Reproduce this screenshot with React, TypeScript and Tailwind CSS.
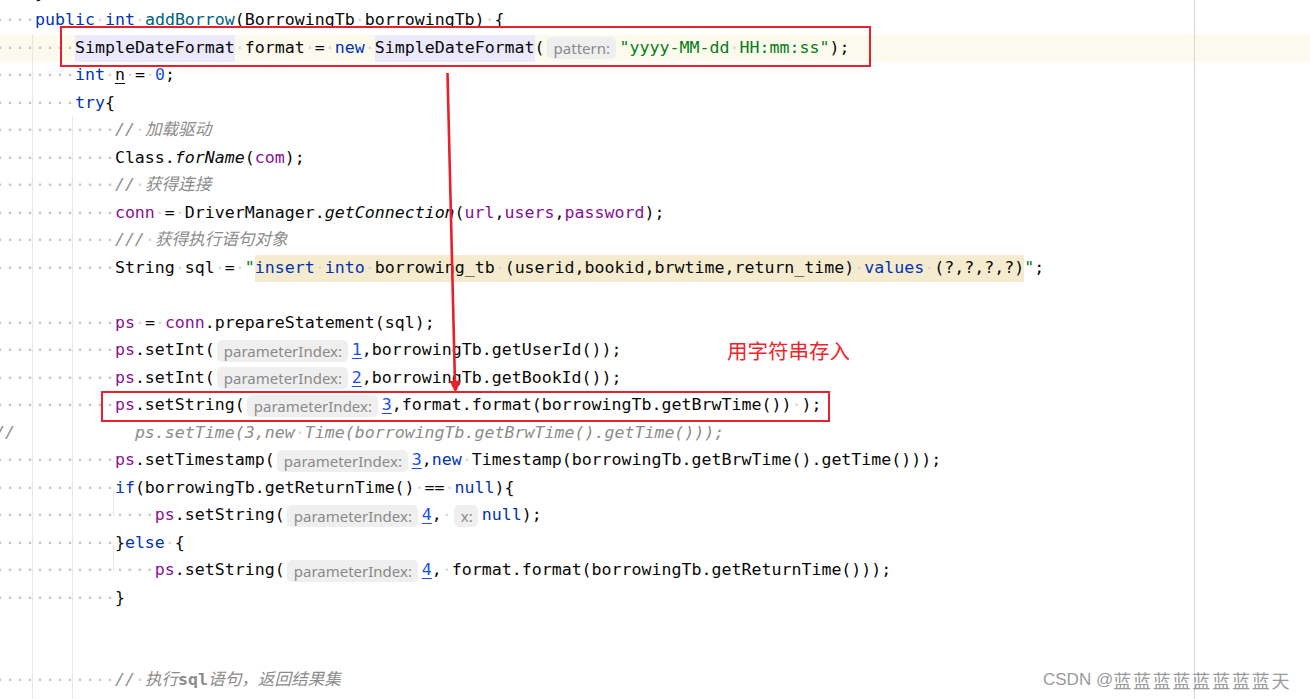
import React from "react";

type Seg = [string, string] | { hint: string; w: number };
type Row = { ind: number; segs: Seg[]; caret?: boolean; noDots?: boolean };

const S: Record<string, string> = {
  d: "text-[#080808]",
  k: "text-[#0033b3]",
  m: "text-[#00627a]",
  f: "text-[#871094]",
  s: "text-[#067d17]",
  n: "text-[#1750eb]",
  nu: "text-[#1750eb] underline underline-offset-[3px] decoration-[1px]",
  u: "text-[#080808] underline underline-offset-[3px] decoration-[1px]",
  i: "italic text-[#080808]",
  c: "italic text-[#8c8c8c]",
  cb: "font-bold text-[#8c8c8c]",
  cls: "bg-[#ebe9fb] text-[#080808]",
  sql: "bg-[#f5ecd0] text-[#080808]",
  sqlk: "bg-[#f5ecd0] text-[#0033b3]",
};

const P = "parameterIndex:";

const rows: Row[] = [
  { ind: 4, noDots: true, segs: [["}", "d"]] },
  {
    ind: 4,
    segs: [
      ["public", "k"],
      [" ", "d"],
      ["int", "k"],
      [" ", "d"],
      ["addBorrow", "m"],
      ["(BorrowingTb borrowingTb) {", "d"],
    ],
  },
  {
    ind: 8,
    caret: true,
    segs: [
      ["SimpleDateFormat", "cls"],
      [" format = ", "d"],
      ["new", "k"],
      [" ", "d"],
      ["SimpleDateFormat", "cls"],
      ["(", "d"],
      { hint: "pattern:", w: 69 },
      ['"yyyy-MM-dd HH:mm:ss"', "s"],
      [");", "d"],
    ],
  },
  {
    ind: 8,
    segs: [
      ["int", "k"],
      [" ", "d"],
      ["n", "u"],
      [" = ", "d"],
      ["0", "n"],
      [";", "d"],
    ],
  },
  { ind: 8, segs: [["try", "k"], ["{", "d"]] },
  { ind: 12, segs: [["// 加载驱动", "c"]] },
  {
    ind: 12,
    segs: [
      ["Class.", "d"],
      ["forName", "i"],
      ["(", "d"],
      ["com", "f"],
      [");", "d"],
    ],
  },
  { ind: 12, segs: [["// 获得连接", "c"]] },
  {
    ind: 12,
    segs: [
      ["conn", "f"],
      [" = DriverManager.", "d"],
      ["getConnection", "i"],
      ["(", "d"],
      ["url", "f"],
      [",", "d"],
      ["users", "f"],
      [",", "d"],
      ["password", "f"],
      [");", "d"],
    ],
  },
  { ind: 12, segs: [["/// 获得执行语句对象", "c"]] },
  {
    ind: 12,
    segs: [
      ["String sql = ", "d"],
      ['"', "s"],
      ["insert", "sqlk"],
      [" ", "sql"],
      ["into", "sqlk"],
      [" borrowing_tb (userid,bookid,brwtime,return_time) ", "sql"],
      ["values", "sqlk"],
      [" (?,?,?,?)", "sql"],
      ['"', "s"],
      [";", "d"],
    ],
  },
  { ind: 0, segs: [] },
  {
    ind: 12,
    segs: [
      ["ps", "f"],
      [" = ", "d"],
      ["conn", "f"],
      [".prepareStatement(sql);", "d"],
    ],
  },
  {
    ind: 12,
    segs: [
      ["ps", "f"],
      [".setInt(", "d"],
      { hint: P, w: 131 },
      ["1", "nu"],
      [",borrowingTb.getUserId());", "d"],
    ],
  },
  {
    ind: 12,
    segs: [
      ["ps", "f"],
      [".setInt(", "d"],
      { hint: P, w: 131 },
      ["2", "nu"],
      [",borrowingTb.getBookId());", "d"],
    ],
  },
  {
    ind: 12,
    segs: [
      ["ps", "f"],
      [".setString(", "d"],
      { hint: P, w: 131 },
      ["3", "nu"],
      [",format.format(borrowingTb.getBrwTime()) );", "d"],
    ],
  },
  {
    ind: 0,
    segs: [
      ["//", "c"],
      ["            ", "raw"],
      ["ps.setTime(3,new Time(borrowingTb.getBrwTime().getTime()));", "c"],
    ],
  },
  {
    ind: 12,
    segs: [
      ["ps", "f"],
      [".setTimestamp(", "d"],
      { hint: P, w: 131 },
      ["3", "nu"],
      [",", "d"],
      ["new", "k"],
      [" Timestamp(borrowingTb.getBrwTime().getTime()));", "d"],
    ],
  },
  {
    ind: 12,
    segs: [
      ["if", "k"],
      ["(borrowingTb.getReturnTime() == ", "d"],
      ["null", "k"],
      ["){", "d"],
    ],
  },
  {
    ind: 16,
    segs: [
      ["ps", "f"],
      [".setString(", "d"],
      { hint: P, w: 131 },
      ["4", "nu"],
      [", ", "d"],
      { hint: "x:", w: 24 },
      ["null", "k"],
      [");", "d"],
    ],
  },
  { ind: 12, segs: [["}", "d"], ["else", "k"], [" {", "d"]] },
  {
    ind: 16,
    segs: [
      ["ps", "f"],
      [".setString(", "d"],
      { hint: P, w: 131 },
      ["4", "nu"],
      [", format.format(borrowingTb.getReturnTime()));", "d"],
    ],
  },
  { ind: 12, segs: [["}", "d"]] },
  { ind: 0, segs: [] },
  { ind: 0, segs: [] },
  {
    ind: 12,
    segs: [
      ["// 执行", "c"],
      ["sql", "cb"],
      ["语句，返回结果集", "c"],
    ],
  },
];

function Text({ text, raw }: { text: string; raw?: boolean }) {
  if (raw) return <span className="whitespace-pre">{text}</span>;
  const parts = text.split(" ");
  const out: React.ReactNode[] = [];
  parts.forEach((p, i) => {
    if (i > 0)
      out.push(
        <span key={"d" + i} className="text-[#d4d4d4] not-italic font-normal">
          ·
        </span>
      );
    if (p) out.push(<span key={"t" + i}>{p}</span>);
  });
  return <span className="whitespace-pre">{out}</span>;
}

function Hint({ text, w }: { text: string; w: number }) {
  return (
    <span
      className="ml-[2px] mr-[4px] flex h-[22px] items-center rounded-[5px] bg-[#efefef] pl-[7px] text-[15px] text-[#8a8a8a] whitespace-pre"
      style={{ width: w, fontFamily: '"Noto Sans", "Open Sans", sans-serif' }}
    >
      {text}
    </span>
  );
}

function CodeRow({ row }: { row: Row }) {
  return (
    <div
      className={
        "flex h-[27.5px] shrink-0 items-stretch " + (row.caret ? "bg-[#fcfaed]" : "")
      }
    >
      {row.ind > 0 && (
        <span
          className={
            "flex items-center whitespace-pre " +
            (row.noDots ? "text-transparent" : "text-[#c4c4c4]")
          }
        >
          {"·".repeat(row.ind)}
        </span>
      )}
      {row.segs.map((s, i) => {
        if (!Array.isArray(s)) {
          return (
            <span key={i} className="flex items-center">
              <Hint text={s.hint} w={s.w} />
            </span>
          );
        }
        const [t, st] = s;
        return (
          <span key={i} className={"flex items-center " + (S[st] || "")}>
            <Text text={t} raw={st === "raw"} />
          </span>
        );
      })}
    </div>
  );
}

export default function App() {
  return (
    <div className="relative h-[699px] w-[1310px] overflow-hidden bg-white">
      <div
        className="-ml-[5px] -mt-[20.5px] flex flex-col text-[16.6px] text-[#080808]"
        style={{
          fontFamily: '"DejaVu Sans Mono", "Noto Sans CJK SC", monospace',
        }}
      >
        {rows.map((r, i) => (
          <CodeRow key={i} row={r} />
        ))}
      </div>

      {/* indent guides */}
      <div className="absolute left-[32px] top-[34px] h-[665px] w-[1px] bg-[#e6e6e6]" />
      <div className="absolute left-[72px] top-[116px] h-[583px] w-[1px] bg-[#e6e6e6]" />
      <div className="absolute left-[113px] top-[490px] h-[26px] w-[1px] bg-[#e6e6e6]" />
      <div className="absolute left-[113px] top-[545px] h-[26px] w-[1px] bg-[#e6e6e6]" />

      {/* right margin */}
      <div className="absolute left-[1194px] top-0 h-[699px] w-[1px] bg-[#d6d6d6]" />

      {/* annotations */}
      <div className="absolute left-[60px] top-[26px] h-[41px] w-[811px] border-2 border-[#e8202b]" />
      <div className="absolute left-[101px] top-[391px] h-[31px] w-[729px] border-2 border-[#e8202b]" />
      <svg
        className="absolute left-0 top-0"
        width="1310"
        height="699"
        viewBox="0 0 1310 699"
      >
        <line x1="447.5" y1="73" x2="455" y2="384" stroke="#e8202b" strokeWidth="2.6" />
        <polygon points="449.5,381 461,380.5 455.5,393" fill="#e8202b" />
      </svg>
      <div
        className="absolute left-[727px] top-[337px] text-[20.5px] leading-[26px] text-[#f0232b]"
        style={{ fontFamily: '"Noto Sans CJK SC", sans-serif' }}
      >
        用字符串存入
      </div>

      {/* watermark */}
      <div
        className="absolute left-[1043px] top-[668px] flex items-center whitespace-pre text-[17px] leading-[24px] text-[#9a9a9a]"
        style={{ fontFamily: '"Liberation Sans", "Noto Sans CJK SC", sans-serif' }}
      >
        <span>CSDN @</span>
        <span className="text-[18px] tracking-[1.8px]" style={{ fontFamily: '"Noto Sans CJK SC", sans-serif' }}>
          蓝蓝蓝蓝蓝蓝蓝蓝天
        </span>
      </div>
    </div>
  );
}
